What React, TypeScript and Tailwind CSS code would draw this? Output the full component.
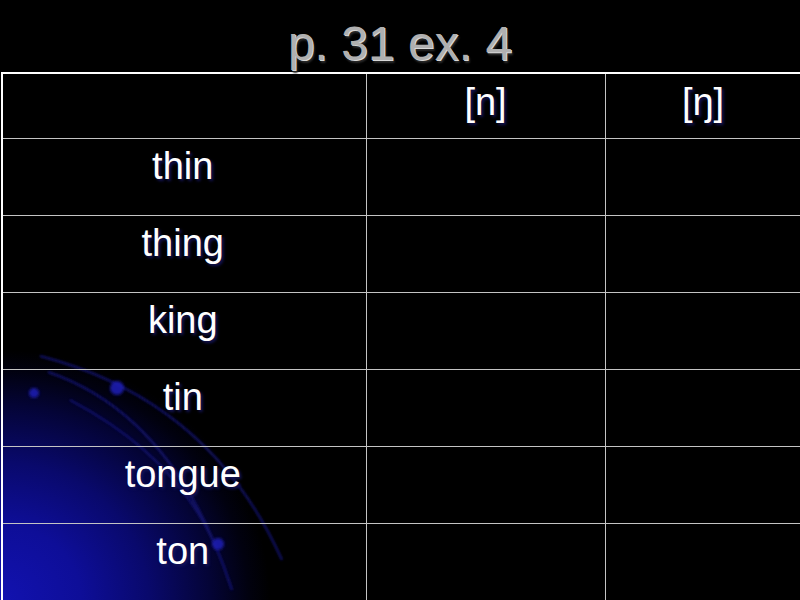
import React from 'react';

const rows = ['thin', 'thing', 'king', 'tin', 'tongue', 'ton'];

function Glow() {
  return (
    <div className="absolute inset-0 pointer-events-none">
      <div className="absolute inset-0 bg-[radial-gradient(ellipse_270px_250px_at_0%_100%,#1212b0_0%,#0e0e98_30%,#09096c_55%,#040436_78%,#01010f_92%,transparent_100%)]" />
      <svg className="absolute inset-0" width="800" height="600" viewBox="0 0 800 600">
        <defs>
          <filter id="soft" x="-20%" y="-20%" width="140%" height="140%">
            <feGaussianBlur stdDeviation="1" />
          </filter>
          <filter id="dot" x="-100%" y="-100%" width="300%" height="300%">
            <feGaussianBlur stdDeviation="1.8" />
          </filter>
        </defs>
        <g fill="none" stroke="#18187a" strokeWidth="2.5" filter="url(#soft)" opacity="0.75">
          <path d="M 40 356 Q 210 400 282 560" />
          <path d="M 48 372 Q 175 415 232 590" />
          <path d="M 70 400 Q 175 455 215 545" />
        </g>
        <g fill="#1e1eb0" filter="url(#dot)" opacity="0.9">
          <circle cx="34" cy="393" r="5" />
          <circle cx="117" cy="388" r="7" />
          <circle cx="218" cy="544" r="6" />
        </g>
      </svg>
    </div>
  );
}

export default function App() {
  return (
    <div className="relative w-[800px] h-[600px] bg-black overflow-hidden font-['Liberation_Sans',Arial,sans-serif]">
      <Glow />
      <div className="relative">
        <h1 className="h-[72px] pt-[20px] text-center text-[48px] leading-none font-normal text-[#b0b0b0] [text-shadow:1px_1px_0_#d8d8d8,2px_3px_2px_#2a2a2a]">
          p. 31 ex. 4
        </h1>
        <div className="pl-px">
          <table className="table-fixed border-collapse w-[799px] text-white text-[38px] leading-none [text-shadow:2px_2px_3px_#14145a]">
            <colgroup>
              <col className="w-[364px]" />
              <col className="w-[239px]" />
              <col className="w-[196px]" />
            </colgroup>
            <thead>
              <tr className="h-[65px] border-t-2 border-t-white">
                <th className="border-l-2 border-r border-b border-[#c4c4c4] border-l-white" />
                <th className="align-top pt-[9px] font-normal border-r border-b border-[#c4c4c4]">[n]</th>
                <th className="align-top pt-[9px] font-normal border-r border-b border-[#c4c4c4]">[ŋ]</th>
              </tr>
            </thead>
            <tbody>
              {rows.map((w) => (
                <tr key={w} className="h-[77px]">
                  <td className="align-top pt-[8px] pr-[3px] text-center border-l-2 border-r border-b border-[#c4c4c4] border-l-white">
                    {w}
                  </td>
                  <td className="border-r border-b border-[#c4c4c4]" />
                  <td className="border-r border-b border-[#c4c4c4]" />
                </tr>
              ))}
            </tbody>
          </table>
        </div>
      </div>
    </div>
  );
}
